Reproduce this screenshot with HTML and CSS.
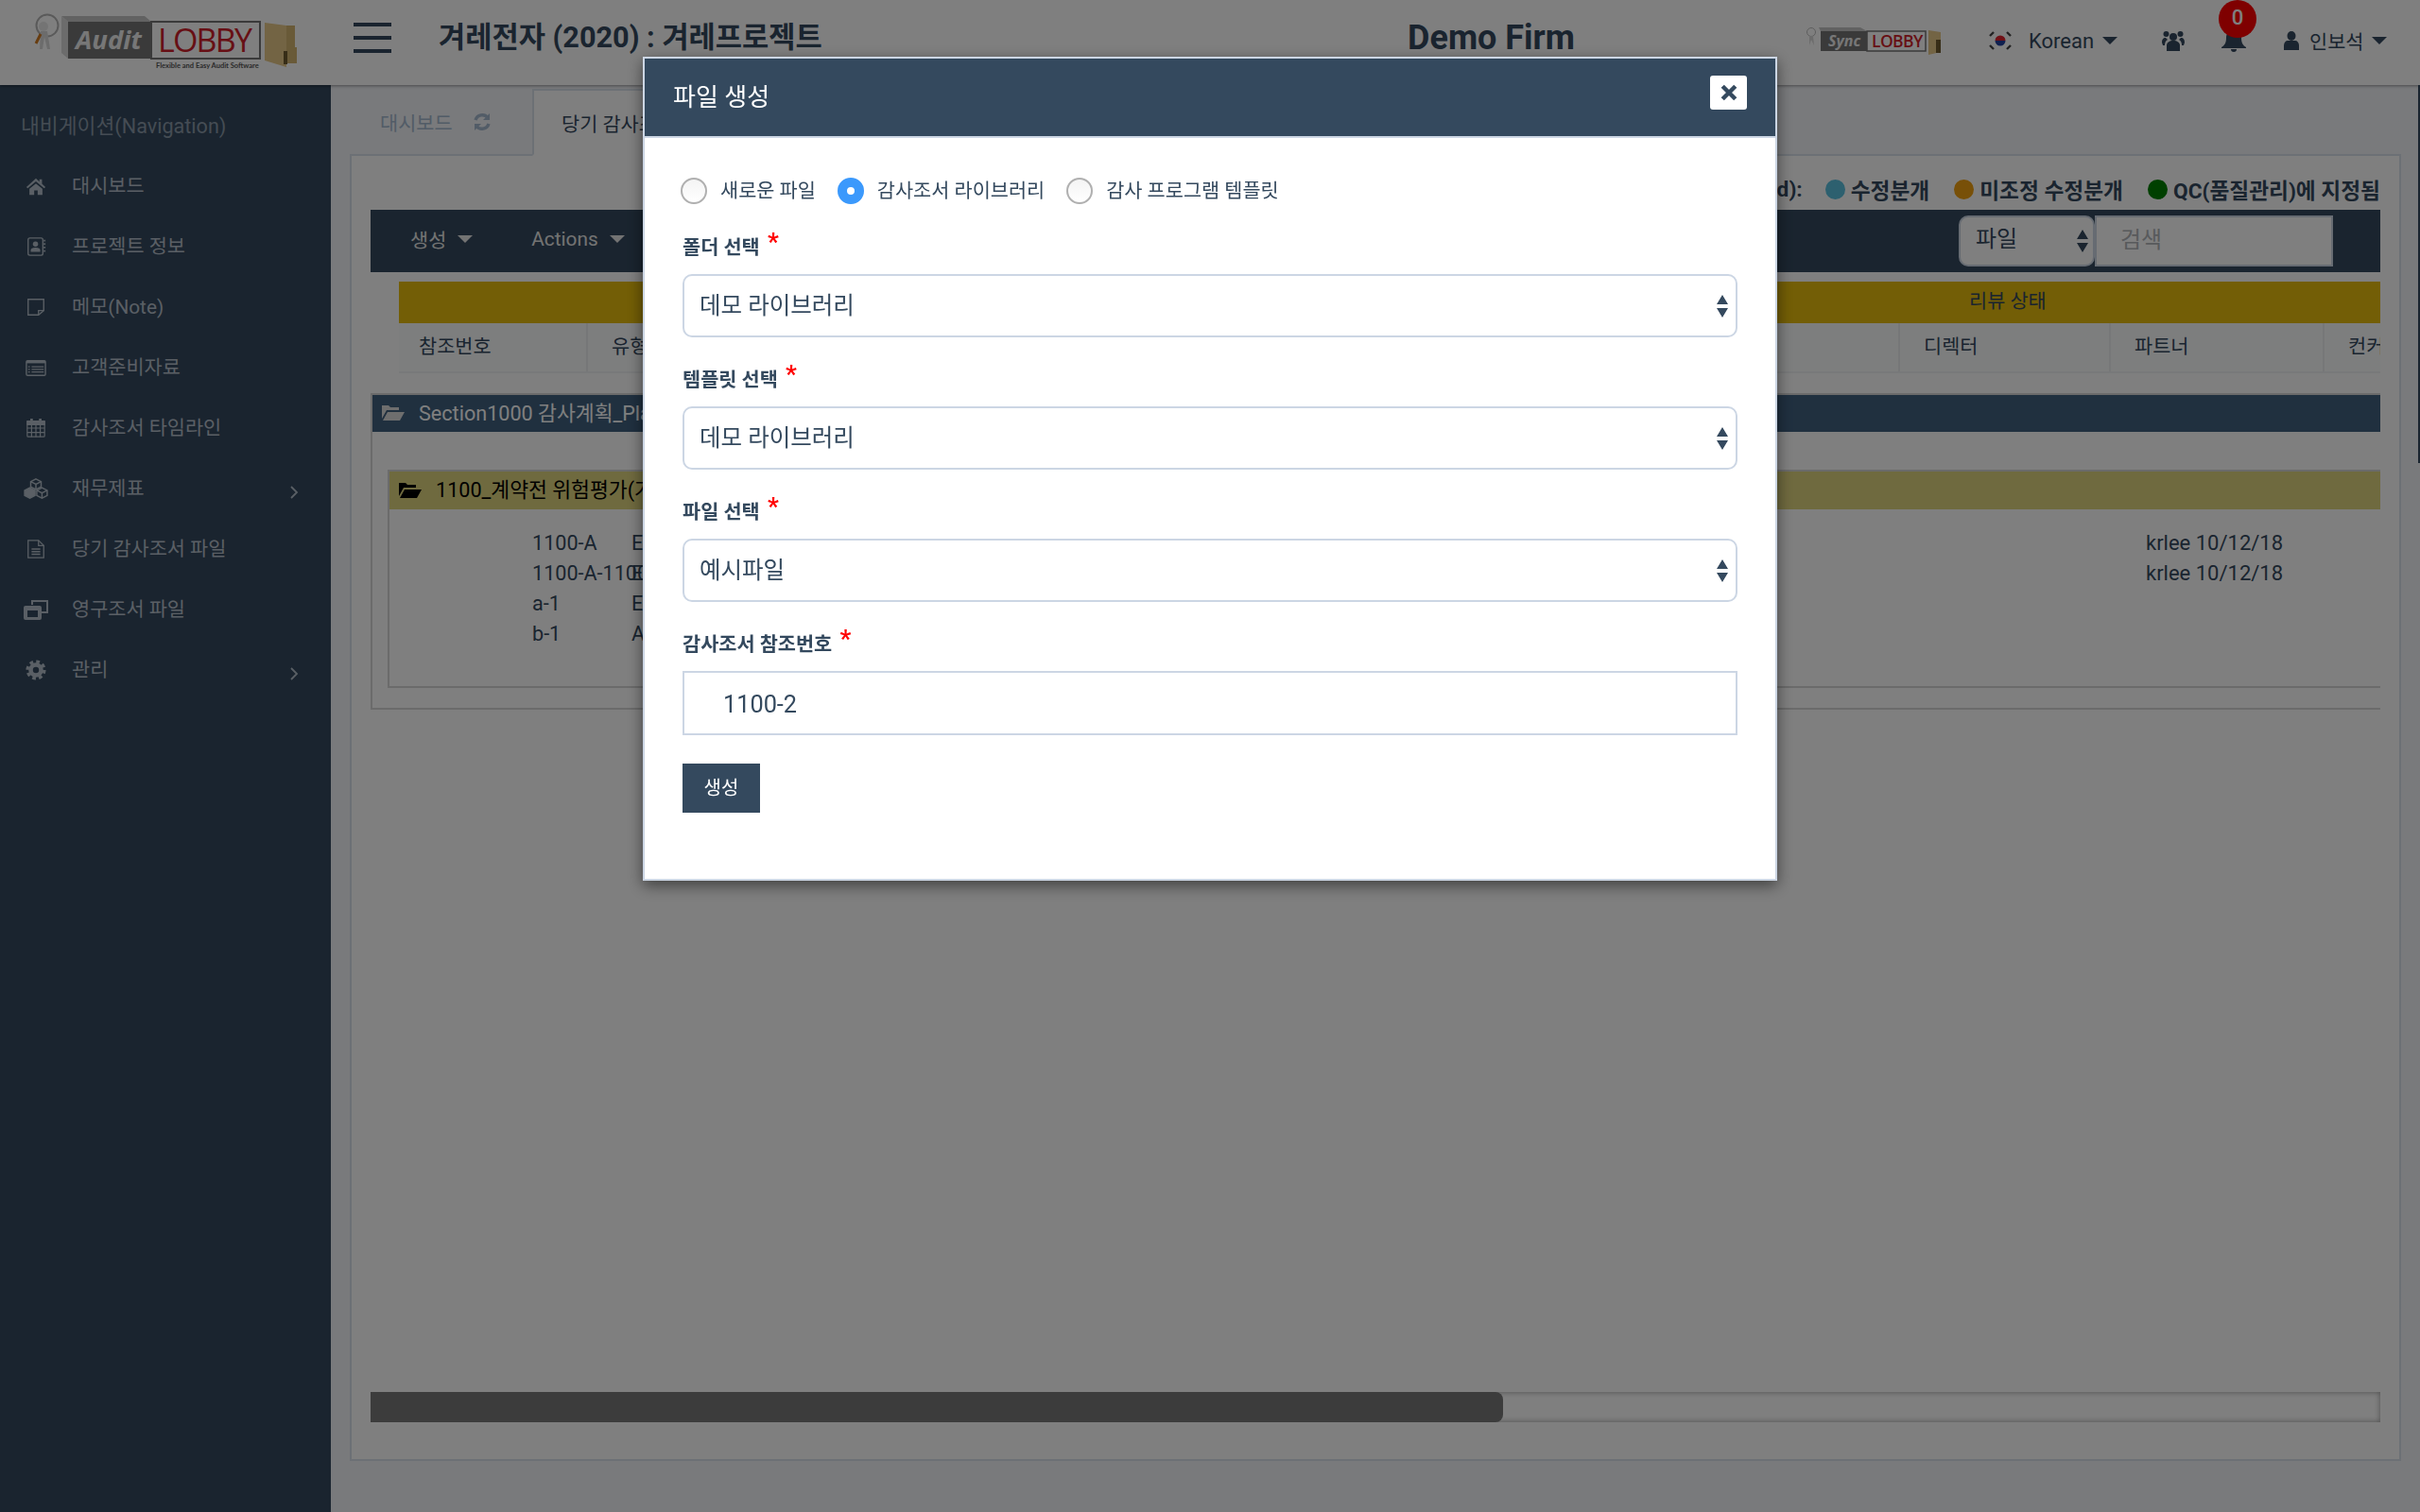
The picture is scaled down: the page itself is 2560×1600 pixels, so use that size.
FILE: index.html
```html
<!DOCTYPE html>
<html lang="ko">
<head>
<meta charset="utf-8">
<title>AuditLobby</title>
<link rel="stylesheet" href="styles.css">
</head>
<body>
<header class="topbar">
  <svg class="logo" viewBox="0 0 320 90" aria-label="AuditLobby">
    <circle cx="50" cy="27" r="11.500" fill="none" stroke="#b5b5b5" stroke-width="2"/>
    <circle cx="46" cy="28" r="5" fill="#e8e8e8"/>
    <path d="M43 33h7l2 12 1 7h-3l-3-13-2 13h-3z" fill="#d8d8d8"/>
    <path d="M43 36l-5 10" stroke="#d07a20" stroke-width="3"/>
    <path d="M65 17h88l7 6H72z" fill="#c4c4c4"/>
    <path d="M65 17l7 6v39l-7-6z" fill="#d8d8d8"/>
    <rect x="72" y="23" width="88" height="39" fill="#757575"/>
    <rect x="160" y="23" width="115" height="39" fill="#fff" stroke="#757575" stroke-width="2"/>
    <text x="80" y="52" class="logo-audit">Audit</text>
    <text x="167" y="55" class="logo-lobby">LOBBY</text>
    <text x="165" y="72" class="logo-tag">Flexible and Easy Audit Software</text>
    <path d="M280 24l23 3v44l-23-7z" fill="#e6c888"/>
    <path d="M303 27h9v23h2v17h-11z" fill="#d2b470"/>
    <path d="M300 54h4v14h-4z" fill="#6f5a2e"/>
  </svg>
  <div class="hamburger"><span></span><span></span><span></span></div>
  <h1 class="project-title">겨레전자 (2020) : 겨레프로젝트</h1>
  <div class="firm">Demo Firm</div>
  <div class="top-right">
    <svg class="sync-logo" viewBox="0 0 148 30" aria-label="SyncLobby">
      <circle cx="7" cy="6" r="4.500" fill="none" stroke="#bbb" stroke-width="1"/>
      <path d="M5 10h4l1 10-3-6-2 6z" fill="#d8d8d8"/>
      <path d="M15 1h44l7 4H17z" fill="#c4c4c4"/>
      <rect x="17" y="5" width="49" height="21" fill="#757575"/>
      <rect x="66" y="5" width="62" height="21" fill="#fff" stroke="#757575" stroke-width="1.500"/>
      <text x="25" y="21" class="sync-a">Sync</text>
      <text x="71" y="21.500" class="sync-b">LOBBY</text>
      <path d="M131 4l13 2v21l-13 3z" fill="#e6c888"/>
      <path d="M139 14h5v14h-5z" fill="#6f5a2e"/>
    </svg>
    <svg class="flag" viewBox="0 0 26 22">
      <ellipse cx="13" cy="11" rx="13" ry="11" fill="#fff"/>
      <path d="M7.500 11a5.500 5.500 0 0 1 11 0z" fill="#e0202c"/>
      <path d="M7.500 11a5.500 5.500 0 0 0 11 0z" fill="#1e3f9e"/>
      <g stroke="#444" stroke-width="2.400"><path d="M2 6l4-4M20 2l4 4M2 16l4 4M20 20l4-4"/></g>
    </svg>
    <span class="lang">Korean</span><span class="caret caret-lang"></span>
    <svg class="ico-group" viewBox="0 0 24 22" fill="currentColor">
      <circle cx="12" cy="7" r="4"/><circle cx="4.500" cy="4" r="3"/><circle cx="19.500" cy="4" r="3"/>
      <path d="M5 22v-6c0-3 3-5 7-5s7 2 7 5v6z"/><path d="M0 13c0-3 1-5 4-5l2 2c-2 1-3 3-3 6H1zM24 13c0-3-1-5-4-5l-2 2c2 1 3 3 3 6h2z"/>
    </svg>
    <div class="bell-wrap">
      <svg class="ico-bell" viewBox="0 0 26 26" fill="currentColor"><path d="M13 2c-5 0-8 3-8 8 0 6-2 8-5 10v1h26v-1c-3-2-5-4-5-10 0-5-3-8-8-8zM10 22h6a3 3 0 0 1-6 0z"/></svg>
      <span class="badge">0</span>
    </div>
    <svg class="ico-user" viewBox="0 0 16 20" fill="currentColor"><ellipse cx="8" cy="5" rx="4.500" ry="5"/><path d="M0 20v-5c0-3 2-5 4-5h8c2 0 4 2 4 5v5z"/></svg>
    <span class="username">인보석</span><span class="caret caret-user"></span>
  </div>
</header>

<div class="layout">
  <nav class="sidebar">
    <div class="nav-title">내비게이션(Navigation)</div>
    <a class="nav-item"><svg class="nav-ico" viewBox="0 0 24 24" fill="currentColor"><path d="M12 3L1 13l1.500 1.500L12 6.500l9.500 8L23 13l-4-3.600V4h-3v2.700zM4.500 15v7h5.500v-5h4v5h5.500v-7L12 9z"/></svg><span>대시보드</span></a>
    <a class="nav-item"><svg class="nav-ico" viewBox="0 0 24 24"><rect x="3" y="2" width="17" height="20" rx="2" fill="none" stroke="currentColor" stroke-width="1.500"/><circle cx="11.500" cy="9" r="3" fill="currentColor"/><path d="M6 18v-2c0-2 2-3 5.500-3s5.500 1 5.500 3v2z" fill="currentColor"/><path d="M21 5h2M21 9h2M21 13h2M21 17h2" stroke="currentColor" stroke-width="2"/></svg><span>프로젝트 정보</span></a>
    <a class="nav-item"><svg class="nav-ico" viewBox="0 0 24 24" fill="none" stroke="currentColor" stroke-width="1.500"><path d="M3 3h18v13l-6 5H3z"/><path d="M21 16h-6v5"/></svg><span>메모(Note)</span></a>
    <a class="nav-item"><svg class="nav-ico" viewBox="0 0 24 24" fill="none" stroke="currentColor" stroke-width="1.500"><rect x="1" y="4" width="22" height="17" rx="1.500"/><path d="M1 5.500h22" stroke-width="3"/><path d="M3 11h2M3 14h2M3 17h2M7 11h14M7 14h14M7 17h14"/></svg><span>고객준비자료</span></a>
    <a class="nav-item"><svg class="nav-ico" viewBox="0 0 24 24" fill="none" stroke="currentColor" stroke-width="1.300"><rect x="2" y="4" width="20" height="18" rx="1"/><path d="M2 4h20v4H2z" fill="currentColor"/><path d="M2 12h20M2 17h20M7 8v14M12 8v14M17 8v14"/><path d="M7 1v5M17 1v5" stroke-width="3"/></svg><span>감사조서 타임라인</span></a>
    <a class="nav-item"><svg class="nav-ico nav-ico-wide" viewBox="0 0 30 24" fill="none" stroke="currentColor" stroke-width="1.600"><path d="M15 1l6 3v6l-6 3-6-3V4z"/><path d="M9 4l6 3 6-3M15 7v6"/><path d="M8 11l6 3v6l-6 3-6-3v-6z" fill="currentColor"/><path d="M22 11l6 3v6l-6 3-6-3v-6z"/><path d="M16 14l6 3 6-3M22 17v6"/></svg><span>재무제표</span><svg class="chev" viewBox="0 0 10 16" fill="none" stroke="currentColor" stroke-width="1.800"><path d="M2 2l6 6-6 6"/></svg></a>
    <a class="nav-item"><svg class="nav-ico" viewBox="0 0 24 24" fill="none" stroke="currentColor" stroke-width="1.400"><path d="M3 2h12l6 6v14H3z"/><path d="M15 2v6h6M7 12h10M7 15h10M7 18h10"/></svg><span>당기 감사조서 파일</span></a>
    <a class="nav-item"><svg class="nav-ico nav-ico-wide" viewBox="0 0 26 22" fill="none" stroke="currentColor" stroke-width="2"><path d="M9 6V2h16v12h-6"/><rect x="1" y="8" width="17" height="13" rx="1" fill="currentColor"/><rect x="4" y="12" width="11" height="7" fill="#34495e" stroke="none"/></svg><span>영구조서 파일</span></a>
    <a class="nav-item"><svg class="nav-ico" viewBox="0 0 24 24" fill="none" stroke="currentColor"><circle cx="12" cy="12" r="6" stroke-width="5"/><circle cx="12" cy="12" r="9.500" stroke-width="4" stroke-dasharray="4 3.460"/></svg><span>관리</span><svg class="chev" viewBox="0 0 10 16" fill="none" stroke="currentColor" stroke-width="1.800"><path d="M2 2l6 6-6 6"/></svg></a>
  </nav>

  <main class="content">
    <div class="tabs">
      <div class="tab tab-plain">대시보드
        <svg class="ico-refresh" viewBox="0 0 20 20" fill="none" stroke="currentColor" stroke-width="3.400"><path d="M3 8a7.500 7.500 0 0 1 13-2.500"/><path d="M17 12a7.500 7.500 0 0 1-13 2.500"/><path d="M18 1v7h-7z" fill="currentColor" stroke="none"/><path d="M2 19v-7h7z" fill="currentColor" stroke="none"/></svg>
      </div>
      <div class="tab tab-active">당기 감사조서 파일</div>
    </div>
    <section class="panel">
      <div class="legend">
        <span class="legend-lead">(d):</span>
        <span class="dot dot-blue"></span><span class="legend-text">수정분개</span>
        <span class="dot dot-orange"></span><span class="legend-text">미조정 수정분개</span>
        <span class="dot dot-green"></span><span class="legend-text">QC(품질관리)에 지정됨</span>
      </div>
      <div class="toolbar">
        <span class="tool-btn tool-first">생성<span class="caret caret-tool"></span></span>
        <span class="tool-btn">Actions<span class="caret caret-tool"></span></span>
        <select class="tool-select"><option>파일</option></select>
        <input class="tool-search" placeholder="검색">
      </div>
      <div class="thead-top">리뷰 상태</div>
      <div class="thead-cols">
        <div class="th th-ref">참조번호</div>
        <div class="th th-type">유형</div>
        <div class="th th-dir">디렉터</div>
        <div class="th th-par">파트너</div>
        <div class="th th-con">컨커</div>
      </div>
      <div class="section">
        <div class="section-bar">
          <svg class="ico-folder" viewBox="0 0 24 18" fill="currentColor"><path d="M0 16V2h7l2 2h9v3H5zM1 18l5-9h18l-5 9z"/></svg>
          <span class="bar-text">Section1000 감사계획_Planning</span>
        </div>
        <div class="sub">
          <div class="sub-bar">
            <svg class="ico-folder" viewBox="0 0 24 18" fill="currentColor"><path d="M0 16V2h7l2 2h9v3H5zM1 18l5-9h18l-5 9z"/></svg>
            <span class="bar-text">1100_계약전 위험평가(가</span>
          </div>
          <div class="rows">
            <div class="row"><span>1100-A</span><span>E</span><span class="row-sign">krlee 10/12/18</span></div>
            <div class="row"><span>1100-A-1100</span><span>E</span><span class="row-sign">krlee 10/12/18</span></div>
            <div class="row"><span>a-1</span><span>E</span><span></span></div>
            <div class="row"><span>b-1</span><span>A</span><span></span></div>
          </div>
        </div>
      </div>
      <div class="hscroll"><div class="hscroll-thumb"></div></div>
    </section>
  </main>
</div>
<div class="edge-strip"></div>

<div class="backdrop">
  <div class="modal">
    <div class="modal-head">
      <h2 class="modal-title">파일 생성</h2>
      <button class="modal-close" aria-label="닫기"><svg viewBox="0 0 16 16" stroke="#34495e" stroke-width="4" fill="none"><path d="M2 2l12 12M14 2L2 14"/></svg></button>
    </div>
    <form class="modal-body">
      <div class="radios">
        <label class="radio"><input type="radio" name="src"><span>새로운 파일</span></label>
        <label class="radio"><input type="radio" name="src" checked><span>감사조서 라이브러리</span></label>
        <label class="radio"><input type="radio" name="src"><span>감사 프로그램 템플릿</span></label>
      </div>
      <div class="field">
        <label class="field-label">폴더 선택 <em>*</em></label>
        <select class="control control-select"><option>데모 라이브러리</option></select>
      </div>
      <div class="field">
        <label class="field-label">템플릿 선택 <em>*</em></label>
        <select class="control control-select"><option>데모 라이브러리</option></select>
      </div>
      <div class="field">
        <label class="field-label">파일 선택 <em>*</em></label>
        <select class="control control-select"><option>예시파일</option></select>
      </div>
      <div class="field">
        <label class="field-label">감사조서 참조번호 <em>*</em></label>
        <input class="control control-input" value="1100-2">
      </div>
      <button type="button" class="submit">생성</button>
    </form>
  </div>
</div>
</body>
</html>
```

FILE: styles.css
```css
* { box-sizing: border-box; }
html, body { margin: 0; height: 100%; }
body {
  overflow: hidden;
  font-family: Roboto, "Noto Sans CJK KR", sans-serif;
  font-size: 20.800px;
  color: #34495e;
  background: #f2f4f8;
  display: flex;
  flex-direction: column;
}

/* top bar */
.topbar {
  flex: 0 0 90px;
  display: flex;
  align-items: center;
  background: #fff;
  box-shadow: 0 1px 3px rgba(0,0,0,.4);
  position: relative;
  z-index: 2;
}
.logo { width: 320px; height: 90px; flex: none; }
.logo-audit { font: italic 700 27.500px "Open Sans", sans-serif; fill: #eee; }
.logo-lobby { font: 400 34px "Open Sans", sans-serif; fill: #cf1f2a; letter-spacing: -1.800px; }
.logo-tag { font: 700 7.500px Lato, sans-serif; fill: #555; }
.sync-a { font: italic 700 16px "Open Sans", sans-serif; fill: #eee; }
.sync-b { font: 600 17.500px "Open Sans", sans-serif; fill: #cf1f2a; letter-spacing: -.6px; }
.hamburger {
  flex: none;
  width: 40px;
  height: 32px;
  margin-left: 54px;
  margin-bottom: 10px;
  display: flex;
  flex-direction: column;
  justify-content: space-between;
}
.hamburger span { height: 4px; background: #34495e; }
.project-title {
  flex: 1;
  margin: 0 0 18px 50px;
  font-size: 30.700px;
  font-weight: 700;
  white-space: nowrap;
}
.firm { flex: none; margin: 0 243px 0 0; font-size: 36px; font-weight: 700; padding-bottom: 10px; }
.top-right { flex: none; width: 651px; display: flex; align-items: center; height: 90px; padding-bottom: 4px; }
.sync-logo { width: 148px; height: 30px; flex: none; }
.flag { width: 26px; height: 22px; margin-left: 46px; flex: none; }
.lang { margin-left: 17px; font-size: 22px; }
.caret {
  display: inline-block;
  flex: none;
  width: 0; height: 0;
  border-left: 8px solid transparent;
  border-right: 8px solid transparent;
  border-top: 8px solid currentColor;
}
.caret-lang { margin-left: 9px; }
.ico-group { width: 24px; height: 22px; margin-left: 47px; flex: none; }
.bell-wrap { position: relative; width: 26px; height: 26px; margin-left: 39px; flex: none; }
.ico-bell { width: 26px; height: 26px; display: block; }
.badge {
  position: absolute;
  left: -3px; top: -30px;
  width: 40px; height: 40px;
  border-radius: 50%;
  background: #f00;
  color: #fff;
  font-size: 22px;
  font-weight: 500;
  text-align: center;
  line-height: 38px;
}
.ico-user { width: 16px; height: 20px; margin-left: 40px; flex: none; }
.username { margin-left: 11px; }
.caret-user { margin-left: 8px; }

/* layout */
.layout { flex: 1; display: flex; min-height: 0; }
.sidebar {
  flex: 0 0 350px;
  background: #34495e;
  color: #b4bfca;
  padding: 30px 34px 0 22px;
}
.nav-title { height: 28px; line-height: 28px; margin-bottom: 16px; color: #8a99a8; font-size: 21.600px; white-space: nowrap; }
.nav-item { height: 64px; display: flex; align-items: center; padding-bottom: 2px; }
.nav-ico { width: 22px; height: 22px; margin: 3px 27px 0 5px; flex: none; }
.nav-ico-wide { width: 28px; margin: 3px 24px 0 2px; }
.chev { width: 10px; height: 16px; margin: 11px 0 0 auto; flex: none; }

.content { flex: 1; display: flex; flex-direction: column; padding: 0 20px 54px; min-width: 0; }
.tabs { flex: 0 0 75px; display: flex; align-items: flex-end; margin-bottom: -2px; position: relative; z-index: 1; }
.tab { height: 71px; display: flex; align-items: center; white-space: nowrap; }
.tab-plain { width: 193px; padding-left: 32px; color: #a4b8ce; border-bottom: 2px solid transparent; }
.ico-refresh { width: 20px; height: 20px; margin-left: 21px; }
.tab-active {
  width: 260px;
  padding-left: 29px;
  background: #fff;
  border: 2px solid #d8e0ea;
  border-bottom-color: #fff;
}
.panel {
  flex: 1;
  display: flex;
  flex-direction: column;
  background: #fff;
  border: 2px solid #d8e0ea;
  padding: 0 20px;
  min-height: 0;
}

/* legend */
.legend { flex: 0 0 57px; display: flex; align-items: center; justify-content: flex-end; padding-top: 14px; font-weight: 700; font-size: 22.700px; color: #34495e; }
.legend-lead { margin-right: 24px; }
.dot { width: 21px; height: 21px; border-radius: 50%; margin-right: 6px; flex: none; }
.dot-blue { background: #5bc0de; }
.dot-orange { background: #f0a010; }
.dot-green { background: #008000; }
.legend-text { margin-right: 26px; white-space: nowrap; }
.legend-text:last-child { margin-right: 0; }

/* toolbar */
.toolbar { flex: 0 0 66px; display: flex; align-items: center; background: #34495e; color: #e6e6e6; padding-right: 50px; }
.tool-btn { display: flex; align-items: center; margin-right: 62px; padding-bottom: 5px; white-space: nowrap; }
.tool-first { margin-left: 42px; }
.caret-tool { margin-left: 12px; }
.tool-select {
  appearance: none;
  margin-left: auto;
  width: 144px;
  height: 54px;
  border: 2px solid #ccd6e4;
  border-radius: 10px;
  padding: 0 0 4px 16px;
  font: inherit;
  font-size: 24px;
  color: #34495e;
  background: #fff url("data:image/svg+xml,%3Csvg xmlns='http://www.w3.org/2000/svg' width='12' height='24'%3E%3Cpath d='M6 0l6 10H0zM6 24L0 14h12z' fill='%2334495e'/%3E%3C/svg%3E") no-repeat right 5px center;
}
.tool-search {
  width: 252px;
  height: 54px;
  border: 2px solid #ccd6e4;
  padding: 0 0 2px 25px;
  font: inherit;
  font-size: 24px;
  background: #fff;
}
.tool-search::placeholder { color: #b0b4b8; }

/* table head */
.thead-top { flex: 0 0 44px; margin: 10px 0 0 30px; padding-left: 1661px; background: #e6bc0c; line-height: 42px; white-space: nowrap; }
.thead-cols {
  flex: 0 0 53px;
  margin-left: 30px;
  display: flex;
  background: #fbfcfd;
  border-bottom: 2px solid #f0f2f4;
  overflow: hidden;
}
.th { height: 100%; display: flex; align-items: center; padding-bottom: 6px; white-space: nowrap; border-right: 2px solid #eceef1; }
.th-ref { width: 200px; padding-left: 21px; }
.th-type { width: 1388px; padding-left: 25px; }
.th-dir { width: 223px; padding-left: 25px; }
.th-par { width: 226px; padding-left: 25px; }
.th-con { width: 59px; padding-left: 25px; border: 0; }

/* sections */
.section { flex: none; margin-top: 21px; border: 2px solid #d6d6d6; border-right: 0; padding-bottom: 21px; font-size: 21.600px; }
.section-bar { height: 39px; display: flex; align-items: center; padding-left: 10px; background: #40607f; color: #fff; white-space: nowrap; }
.bar-text { padding-bottom: 5px; }
.ico-folder { width: 24px; height: 18px; margin: 0 15px 3px 0; flex: none; }
.section-bar .ico-folder { color: #ddd; }
.sub { margin: 40px 0 0 16px; border: 2px solid #d6d6d6; border-right: 0; padding-bottom: 39px; }
.sub-bar { height: 40px; display: flex; align-items: center; padding-left: 10px; background: #dfd47e; color: #000; white-space: nowrap; }
.rows { padding: 20px 0 0 151px; }
.row { display: grid; grid-template-columns: 105px 1fr 248px; height: 32px; line-height: 32px; white-space: nowrap; }
.row-sign { font-size: 22px; }

.hscroll {
  flex: 0 0 32px;
  margin: auto 0 39px;
  background: #fff;
  box-shadow: inset 0 0 6px rgba(0,0,0,.4);
}
.hscroll-thumb { width: 1198px; height: 100%; background: #787878; border-radius: 0 8px 8px 0; }

/* collapsed panel peeking in at the right edge */
.edge-strip { position: fixed; top: 90px; right: 0; width: 2px; height: 400px; background: #34495e; z-index: 3; }

/* modal */
.backdrop {
  position: fixed;
  inset: 0;
  z-index: 10;
  background: rgba(0,0,0,.5);
  display: flex;
  justify-content: center;
  align-items: flex-start;
  padding-top: 60px;
}
.modal {
  width: 1200px;
  height: 872px;
  background: #fff;
  border: 2px solid #ccd6e4;
  box-shadow: 0 5px 15px rgba(0,0,0,.5);
}
.modal-head {
  height: 84px;
  display: flex;
  align-items: center;
  justify-content: space-between;
  padding: 0 30px 6px;
  background: #34495e;
  border-bottom: 2px solid #ccd6e4;
}
.modal-title { margin: 0; font-size: 26px; font-weight: 400; color: #fff; }
.modal-close {
  width: 39px; height: 36px;
  padding: 0;
  border: 0;
  border-radius: 3px;
  background: #fff;
  display: flex;
  align-items: center;
  justify-content: center;
  margin-bottom: 4px;
}
.modal-close svg { width: 18px; height: 18px; }
.modal-body { padding: 42px 40px 0; }
.radios { display: flex; height: 28px; margin: 0 0 34px -2px; font-size: 20.800px; }
.radio { display: flex; align-items: center; margin-right: 23px; }
.radio span { padding-bottom: 5px; }
.radio input {
  appearance: none;
  margin: 0 14px 0 0;
  width: 28px; height: 28px;
  border-radius: 50%;
  border: 2px solid #b0b0b0;
  background: linear-gradient(#f4f4f4, #fff);
}
.radio input:checked { border: 10px solid #3b99fc; background: #fff; }
.field { margin-bottom: 33px; }
.field-label { display: block; height: 24px; line-height: 24px; margin-bottom: 16px; font-weight: 700; font-size: 20.800px; }
.field-label em { font-style: normal; font-weight: 700; color: #f00; font-size: 26px; margin-left: 3px; vertical-align: 4px; line-height: 0; }
.control { display: block; width: 100%; height: 67px; border: 2px solid #ccd6e4; font: inherit; font-size: 24.500px; color: #34495e; background: #fff; }
.control-select {
  appearance: none;
  border-radius: 10px;
  padding-left: 16px;
  background: #fff url("data:image/svg+xml,%3Csvg xmlns='http://www.w3.org/2000/svg' width='12' height='24'%3E%3Cpath d='M6 0l6 10H0zM6 24L0 14h12z' fill='%2334495e'/%3E%3C/svg%3E") no-repeat right 8px center;
}
.control-input { height: 68px; padding: 2px 0 0 41px; font-size: 25.300px; }
.field:last-of-type { margin-bottom: 30px; }
.submit {
  display: block;
  width: 82px; height: 52px;
  padding: 0 0 4px;
  border: 0;
  background: #34495e;
  color: #fff;
  font: inherit;
  font-size: 20px;
}
```
